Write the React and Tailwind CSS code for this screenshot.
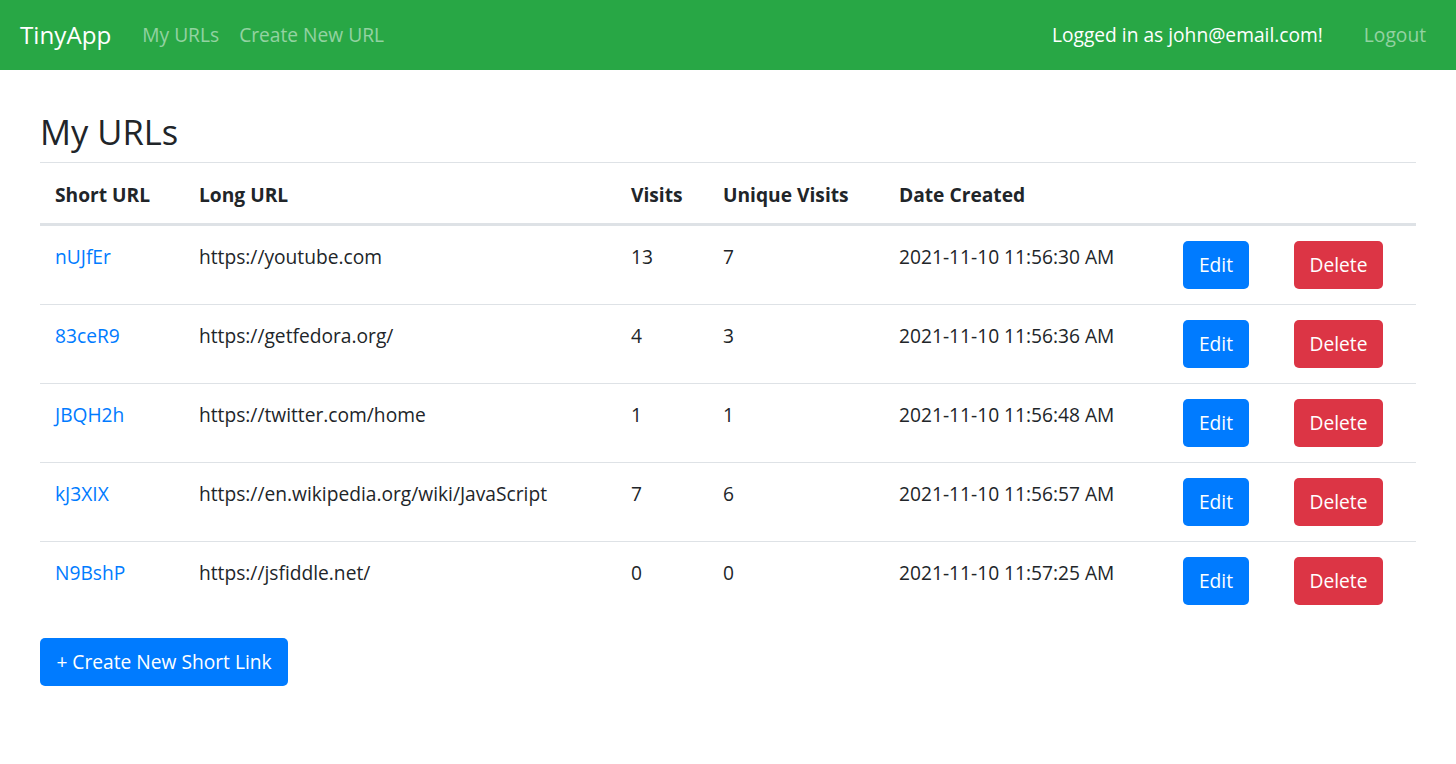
import React from "react";

const rows = [
  ["nUJfEr", "https://youtube.com", "13", "7", "2021-11-10 11:56:30 AM"],
  ["83ceR9", "https://getfedora.org/", "4", "3", "2021-11-10 11:56:36 AM"],
  ["JBQH2h", "https://twitter.com/home", "1", "1", "2021-11-10 11:56:48 AM"],
  ["kJ3XIX", "https://en.wikipedia.org/wiki/JavaScript", "7", "6", "2021-11-10 11:56:57 AM"],
  ["N9BshP", "https://jsfiddle.net/", "0", "0", "2021-11-10 11:57:25 AM"],
];

const th = "border-t border-b-2 border-[#dee2e6] px-[15px] pt-[17px] pb-[13px] leading-[30px] text-left align-bottom font-bold";
const td = "border-t border-[#dee2e6] px-[15px] pt-[16px] pb-[14px] leading-[30px] text-left align-top";
const tdBtn = "border-t border-[#dee2e6] px-[15px] py-[15px] leading-[30px] text-left align-top";

export default function App() {
  return (
    <div className="min-h-screen bg-white text-[#212529] font-['Open_Sans',sans-serif] text-[19.2px]">
      <nav className="h-[70px] bg-[#28a745] flex items-center pl-[20px] pr-[30px]">
        <span className="text-white text-[24.2px] mr-[21px]">TinyApp</span>
        <a className="text-white/50 px-[10px]">My URLs</a>
        <a className="text-white/50 px-[10px]">Create New URL</a>
        <div className="ml-auto flex items-center">
          <span className="text-white">Logged in as john@email.com!</span>
          <a className="text-white/50 ml-[41px]">Logout</a>
        </div>
      </nav>
      <main className="px-[40px]">
        <h2 className="mt-[40px] mb-[9px] text-[34.5px] leading-[43px] font-normal">My URLs</h2>
        <table className="w-full table-fixed border-separate border-spacing-0">
          <thead>
            <tr>
              <th className={`${th} w-[144px]`}>Short URL</th>
              <th className={`${th} w-[432px]`}>Long URL</th>
              <th className={`${th} w-[92px]`}>Visits</th>
              <th className={`${th} w-[176px]`}>Unique Visits</th>
              <th className={`${th} w-[284px]`}>Date Created</th>
              <th className={`${th} w-[111px]`}></th>
              <th className={`${th} w-[137px]`}></th>
            </tr>
          </thead>
          <tbody>
            {rows.map((r) => (
              <tr key={r[0]}>
                <td className={td}>
                  <a className="text-[#007bff]">{r[0]}</a>
                </td>
                <td className={td}>{r[1]}</td>
                <td className={td}>{r[2]}</td>
                <td className={td}>{r[3]}</td>
                <td className={td}>{r[4]}</td>
                <td className={tdBtn}>
                  <button className="h-[48px] w-[66px] rounded-[5px] bg-[#007bff] text-white flex items-center justify-center">
                    Edit
                  </button>
                </td>
                <td className={tdBtn}>
                  <button className="h-[48px] w-[89px] rounded-[5px] bg-[#dc3545] text-white flex items-center justify-center">
                    Delete
                  </button>
                </td>
              </tr>
            ))}
          </tbody>
        </table>
        <button className="mt-[18px] h-[48px] w-[248px] rounded-[5px] bg-[#007bff] text-white flex items-center justify-center">
          + Create New Short Link
        </button>
      </main>
    </div>
  );
}
